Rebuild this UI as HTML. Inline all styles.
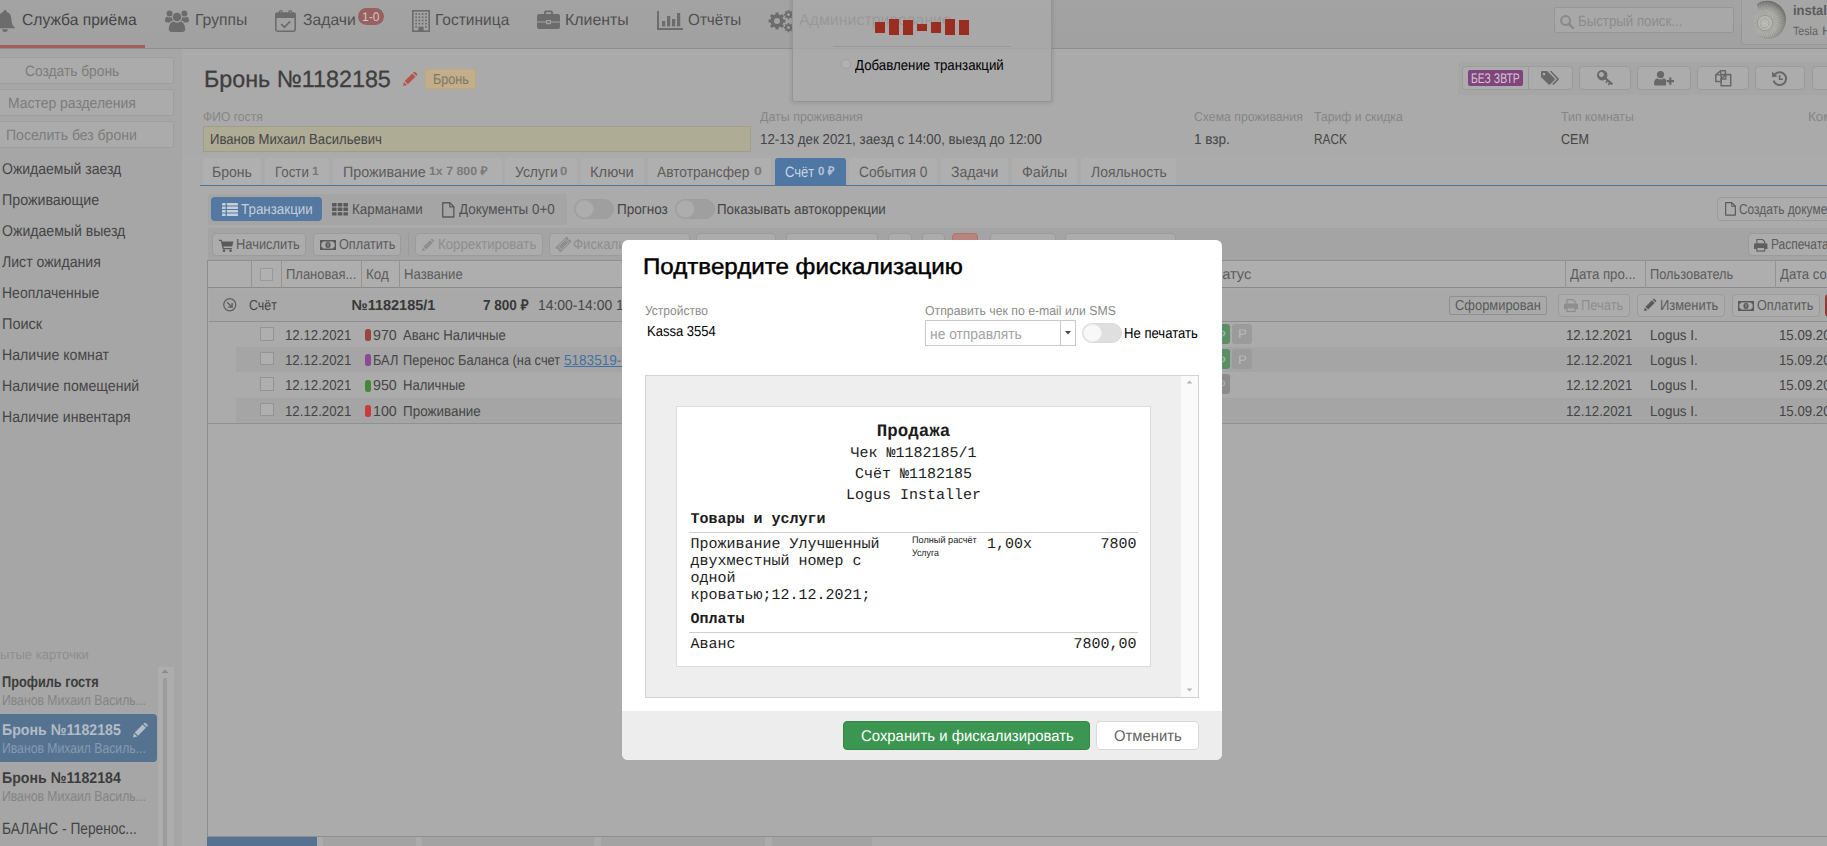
<!DOCTYPE html>
<html lang="ru"><head><meta charset="utf-8"><title>Бронь №1182185</title>
<style>
html,body{margin:0;padding:0}
body{width:1827px;height:846px;overflow:hidden;position:relative;background:#ababab;font-family:"Liberation Sans",sans-serif}
.b{position:absolute;box-sizing:border-box;display:block}
.t{position:absolute;white-space:nowrap;transform-origin:0 50%;display:block;font-family:"Liberation Sans",sans-serif;font-weight:normal;text-rendering:geometricPrecision}
.m{font-family:"Liberation Mono",monospace}
.bd{font-weight:bold}
</style></head><body>
<div class="b" style="left:0.00px;top:49.00px;width:182.00px;height:797.00px;background:#a6a6a6;"></div>
<div class="b" style="left:182.00px;top:49.00px;width:1645.00px;height:106.00px;background:#aaaaaa;"></div>
<div class="b" style="left:0.00px;top:0.00px;width:1827.00px;height:48.00px;background:linear-gradient(#a3a3a3,#a1a1a1);"></div>
<div class="b" style="left:0.00px;top:48.00px;width:1827.00px;height:1.00px;background:#8e8e8e;"></div>
<div class="b" style="left:0.00px;top:45.00px;width:145.00px;height:3.00px;background:#a55f5a;"></div>
<svg class="b" style="left:-6.00px;top:10.00px;overflow:visible;" width="22.00" height="22.00" viewBox="0 0 22 22"><circle cx="11" cy="1.6" r="1.6" fill="#6c6c6c"/><path d="M11 1.8C6.3 1.8 4.6 5.5 4.6 9.5C4.6 13.8 3 16 0.6 18.2H21.4C19 16 17.4 13.8 17.4 9.5C17.4 5.5 15.7 1.8 11 1.8Z" fill="#6c6c6c"/><path d="M8.2 19.2a2.8 2.8 0 0 0 5.6 0z" fill="#6c6c6c"/></svg>
<svg class="b" style="left:165.00px;top:10.00px;overflow:visible;" width="24.00" height="22.00" viewBox="0 0 24 22"><circle cx="12" cy="7" r="4.3" fill="#6c6c6c"/><path d="M3.8 19.2C3.8 14 6.8 11.6 8.8 11.6C9.8 12.4 10.9 12.8 12 12.8C13.1 12.8 14.2 12.4 15.2 11.6C17.2 11.6 20.2 14 20.2 19.2C20.2 21 19 22 17.4 22H6.6C5 22 3.8 21 3.8 19.2Z" fill="#6c6c6c"/><circle cx="4.6" cy="3.6" r="3" fill="#6c6c6c"/><circle cx="19.4" cy="3.6" r="3" fill="#6c6c6c"/><path d="M0 10.5C0 8 1.2 6.8 2.4 6.8C3.1 7.3 3.8 7.6 4.6 7.6C5.4 7.6 6.2 7.3 6.8 6.9C6.9 8.5 7.4 9.6 8.2 10.6C6.8 10.7 5.6 11.3 4.8 12.4H2C0.8 12.4 0 11.7 0 10.5Z" fill="#6c6c6c"/><path d="M24 10.5C24 8 22.8 6.8 21.6 6.8C20.9 7.3 20.2 7.6 19.4 7.6C18.6 7.6 17.8 7.3 17.2 6.9C17.1 8.5 16.6 9.6 15.8 10.6C17.2 10.7 18.4 11.3 19.2 12.4H22C23.2 12.4 24 11.7 24 10.5Z" fill="#6c6c6c"/></svg>
<svg class="b" style="left:275.00px;top:10.00px;overflow:visible;" width="21.00" height="22.00" viewBox="0 0 21 22"><path d="M0.8 4.6a1.6 1.6 0 0 1 1.6-1.6H18.6a1.6 1.6 0 0 1 1.6 1.6V19.6a1.6 1.6 0 0 1-1.6 1.6H2.4a1.6 1.6 0 0 1-1.6-1.6Z" fill="none" stroke="#6c6c6c" stroke-width="1.6"/><rect x="0.8" y="3" width="19.4" height="5" fill="#6c6c6c"/><rect x="4.4" y="0.6" width="2.8" height="5.2" rx="1.4" fill="none" stroke="#6c6c6c" stroke-width="1.1"/><rect x="13.8" y="0.6" width="2.8" height="5.2" rx="1.4" fill="none" stroke="#6c6c6c" stroke-width="1.1"/><path d="M6.2 14.2L9.4 17.2L15.2 11.4" fill="none" stroke="#6c6c6c" stroke-width="1.7"/></svg>
<svg class="b" style="left:412.00px;top:10.00px;overflow:visible;" width="18.00" height="22.00" viewBox="0 0 18 22"><rect x="0.8" y="0.8" width="16.4" height="20.4" fill="none" stroke="#6c6c6c" stroke-width="1.6"/><rect x="3.3" y="3.2" width="1.7" height="1.7" fill="#6c6c6c"/><rect x="6.5" y="3.2" width="1.7" height="1.7" fill="#6c6c6c"/><rect x="9.8" y="3.2" width="1.7" height="1.7" fill="#6c6c6c"/><rect x="13.1" y="3.2" width="1.7" height="1.7" fill="#6c6c6c"/><rect x="3.3" y="6.4" width="1.7" height="1.7" fill="#6c6c6c"/><rect x="6.5" y="6.4" width="1.7" height="1.7" fill="#6c6c6c"/><rect x="9.8" y="6.4" width="1.7" height="1.7" fill="#6c6c6c"/><rect x="13.1" y="6.4" width="1.7" height="1.7" fill="#6c6c6c"/><rect x="3.3" y="9.6" width="1.7" height="1.7" fill="#6c6c6c"/><rect x="6.5" y="9.6" width="1.7" height="1.7" fill="#6c6c6c"/><rect x="9.8" y="9.6" width="1.7" height="1.7" fill="#6c6c6c"/><rect x="13.1" y="9.6" width="1.7" height="1.7" fill="#6c6c6c"/><rect x="3.3" y="12.8" width="1.7" height="1.7" fill="#6c6c6c"/><rect x="6.5" y="12.8" width="1.7" height="1.7" fill="#6c6c6c"/><rect x="9.8" y="12.8" width="1.7" height="1.7" fill="#6c6c6c"/><rect x="13.1" y="12.8" width="1.7" height="1.7" fill="#6c6c6c"/><rect x="3.3" y="16.0" width="1.7" height="1.7" fill="#6c6c6c"/><rect x="13.1" y="16.0" width="1.7" height="1.7" fill="#6c6c6c"/><rect x="6.4" y="16.6" width="5.2" height="4.6" fill="#6c6c6c"/></svg>
<svg class="b" style="left:536.50px;top:10.00px;overflow:visible;" width="23.00" height="19.00" viewBox="0 0 23 19"><path d="M8 4.2V2.4a1 1 0 0 1 1-1h5a1 1 0 0 1 1 1V4.2" fill="none" stroke="#6c6c6c" stroke-width="1.9"/><path d="M0 6a2 2 0 0 1 2-2H21a2 2 0 0 1 2 2V11.4H14V10H9V11.4H0Z" fill="#6c6c6c"/><path d="M0 12.6H9V14.2H14V12.6H23V17a2 2 0 0 1-2 2H2a2 2 0 0 1-2-2Z" fill="#6c6c6c"/><rect x="10.2" y="11.2" width="2.6" height="1.8" fill="#6c6c6c"/></svg>
<svg class="b" style="left:656.50px;top:11.30px;overflow:visible;" width="26.00" height="19.00" viewBox="0 0 26 19"><path d="M1 0V18H26" fill="none" stroke="#6c6c6c" stroke-width="2"/><rect x="5" y="10" width="3.2" height="5.4" fill="#6c6c6c"/><rect x="10" y="5" width="3.2" height="10.4" fill="#6c6c6c"/><rect x="15" y="8" width="3.2" height="7.4" fill="#6c6c6c"/><rect x="20" y="2" width="3.2" height="13.4" fill="#6c6c6c"/></svg>
<svg class="b" style="left:768.00px;top:10.00px;overflow:visible;" width="26.00" height="22.50" viewBox="0 0 26 22.5"><path d="M17.47 9.52 L17.47 12.48 L15.42 12.54 L14.63 14.45 L16.04 15.95 L13.95 18.04 L12.45 16.63 L10.54 17.42 L10.48 19.47 L7.52 19.47 L7.46 17.42 L5.55 16.63 L4.05 18.04 L1.96 15.95 L3.37 14.45 L2.58 12.54 L0.53 12.48 L0.53 9.52 L2.58 9.46 L3.37 7.55 L1.96 6.05 L4.05 3.96 L5.55 5.37 L7.46 4.58 L7.52 2.53 L10.48 2.53 L10.54 4.58 L12.45 5.37 L13.95 3.96 L16.04 6.05 L14.63 7.55 L15.42 9.46Z M6.00 11.00 a3.00 3.00 0 1 0 6.00 0 a3.00 3.00 0 1 0 -6.00 0Z" fill="#6c6c6c" fill-rule="evenodd"/><path d="M25.03 3.81 L25.03 5.39 L23.81 5.39 L23.40 6.38 L24.26 7.25 L23.15 8.36 L22.28 7.50 L21.29 7.91 L21.29 9.13 L19.71 9.13 L19.71 7.91 L18.72 7.50 L17.85 8.36 L16.74 7.25 L17.60 6.38 L17.19 5.39 L15.97 5.39 L15.97 3.81 L17.19 3.81 L17.60 2.82 L16.74 1.95 L17.85 0.84 L18.72 1.70 L19.71 1.29 L19.71 0.07 L21.29 0.07 L21.29 1.29 L22.28 1.70 L23.15 0.84 L24.26 1.95 L23.40 2.82 L23.81 3.81Z M19.00 4.60 a1.50 1.50 0 1 0 3.00 0 a1.50 1.50 0 1 0 -3.00 0Z" fill="#6c6c6c" fill-rule="evenodd"/><path d="M25.03 16.81 L25.03 18.39 L23.81 18.39 L23.40 19.38 L24.26 20.25 L23.15 21.36 L22.28 20.50 L21.29 20.91 L21.29 22.13 L19.71 22.13 L19.71 20.91 L18.72 20.50 L17.85 21.36 L16.74 20.25 L17.60 19.38 L17.19 18.39 L15.97 18.39 L15.97 16.81 L17.19 16.81 L17.60 15.82 L16.74 14.95 L17.85 13.84 L18.72 14.70 L19.71 14.29 L19.71 13.07 L21.29 13.07 L21.29 14.29 L22.28 14.70 L23.15 13.84 L24.26 14.95 L23.40 15.82 L23.81 16.81Z M19.00 17.60 a1.50 1.50 0 1 0 3.00 0 a1.50 1.50 0 1 0 -3.00 0Z" fill="#6c6c6c" fill-rule="evenodd"/></svg>
<span class="t" style="left:21.50px;top:10.00px;font-size:16px;line-height:21px;color:#454545;transform:scaleX(0.9775);">Служба приёма</span>
<span class="t" style="left:194.50px;top:10.00px;font-size:16px;line-height:21px;color:#505050;transform:scaleX(0.9816);">Группы</span>
<span class="t" style="left:302.50px;top:10.00px;font-size:16px;line-height:21px;color:#505050;transform:scaleX(0.9821);">Задачи</span>
<div class="b" style="left:358.00px;top:8.00px;width:26.00px;height:17.00px;background:#986060;border-radius:9px;"></div>
<span class="t" style="left:362.20px;top:9.00px;font-size:12.5px;line-height:16px;color:#d6c6c2;transform:scaleX(0.9633);">1-0</span>
<span class="t" style="left:434.50px;top:10.00px;font-size:16px;line-height:21px;color:#505050;transform:scaleX(0.9695);">Гостиница</span>
<span class="t" style="left:564.50px;top:10.00px;font-size:16px;line-height:21px;color:#505050;transform:scaleX(0.9944);">Клиенты</span>
<span class="t" style="left:687.50px;top:10.00px;font-size:16px;line-height:21px;color:#505050;transform:scaleX(0.9545);">Отчёты</span>
<span class="t" style="left:798.50px;top:10.00px;font-size:16px;line-height:21px;color:#505050;transform:scaleX(0.9950);">Администрирование</span>
<div class="b" style="left:1554.00px;top:7.00px;width:180.00px;height:26.00px;background:#a8a8a8;border:1px solid #979797;border-radius:2px;"></div>
<svg class="b" style="left:1559.50px;top:14.50px;overflow:visible;" width="14.00" height="14.00" viewBox="0 0 14 14"><circle cx="5.6" cy="5.6" r="4.5" fill="none" stroke="#8a8a8a" stroke-width="2"/><path d="M8.8 8.8L13 13" stroke="#8a8a8a" stroke-width="2.4" stroke-linecap="round"/></svg>
<span class="t" style="left:1577.50px;top:12.00px;font-size:15px;line-height:20px;color:#8c8c8c;transform:scaleX(0.8835);">Быстрый поиск...</span>
<div class="b" style="left:1740.50px;top:-6.00px;width:99.50px;height:50.50px;background:#a6a6a6;border:1px solid #979797;border-radius:4px;"></div>
<svg class="b" style="left:1752.00px;top:0.00px;" width="35.00" height="40.00" viewBox="0 0 35 40"><defs><radialGradient id="shg" cx="13" cy="23" r="22" gradientUnits="userSpaceOnUse"><stop offset="0" stop-color="#c2c2be"/><stop offset="0.55" stop-color="#b4b4b0"/><stop offset="0.85" stop-color="#8e8e8a"/><stop offset="1" stop-color="#727270"/></radialGradient><clipPath id="shc"><path d="M5 4C8 1 14 0 19 1C27 3 34 10 34 19C34 30 26 39 16 39C7 39 1 32 1 24C1 18 4 13 9 12C7 10 5 7 5 4Z"/></clipPath></defs><path d="M5 4C8 1 14 0 19 1C27 3 34 10 34 19C34 30 26 39 16 39C7 39 1 32 1 24C1 18 4 13 9 12C7 10 5 7 5 4Z" fill="url(#shg)"/><g clip-path="url(#shc)" stroke="#666662" stroke-width="0.55" opacity="0.45"><path d="M20.50 23.00L42.07 30.42"/><path d="M20.42 24.07L40.72 34.48"/><path d="M20.20 25.11L38.80 38.31"/><path d="M19.82 26.12L36.36 41.83"/><path d="M19.31 27.05L33.44 44.96"/><path d="M18.67 27.91L30.11 47.64"/><path d="M17.91 28.67L26.43 49.83"/><path d="M17.05 29.31L22.47 51.47"/><path d="M16.12 29.82L18.32 52.52"/><path d="M15.11 30.20L14.07 52.98"/><path d="M14.07 30.42L9.79 52.83"/><path d="M13.00 30.50L5.58 52.07"/><path d="M11.93 30.42L1.52 50.72"/><path d="M10.89 30.20L-2.31 48.80"/><path d="M9.88 29.82L-5.83 46.36"/><path d="M8.95 29.31L-8.96 43.44"/><path d="M8.09 28.67L-11.64 40.11"/><path d="M7.33 27.91L-13.83 36.43"/><path d="M6.69 27.05L-15.47 32.47"/><path d="M6.18 26.12L-16.52 28.32"/><path d="M5.80 25.11L-16.98 24.07"/><path d="M5.58 24.07L-16.83 19.79"/><path d="M5.50 23.00L-16.07 15.58"/><path d="M5.58 21.93L-14.72 11.52"/><path d="M5.80 20.89L-12.80 7.69"/><path d="M6.18 19.88L-10.36 4.17"/><path d="M6.69 18.95L-7.44 1.04"/><path d="M7.33 18.09L-4.11 -1.64"/><path d="M8.09 17.33L-0.43 -3.83"/><path d="M8.95 16.69L3.53 -5.47"/><path d="M9.88 16.18L7.68 -6.52"/><path d="M10.89 15.80L11.93 -6.98"/><path d="M11.93 15.58L16.21 -6.83"/><path d="M13.00 15.50L20.42 -6.07"/><path d="M14.07 15.58L24.48 -4.72"/><path d="M15.11 15.80L28.31 -2.80"/><path d="M16.12 16.18L31.83 -0.36"/><path d="M17.05 16.69L34.96 2.56"/><path d="M17.91 17.33L37.64 5.89"/><path d="M18.67 18.09L39.83 9.57"/><path d="M19.31 18.95L41.47 13.53"/><path d="M19.82 19.88L42.52 17.68"/><path d="M20.20 20.89L42.98 21.93"/><path d="M20.42 21.93L42.83 26.21"/></g><circle cx="13" cy="23" r="7.6" fill="#b6b6b2" stroke="#8c8c88" stroke-width="0.7"/><circle cx="12.6" cy="23.3" r="4.4" fill="#bcbcb8" stroke="#94948f" stroke-width="0.6"/><circle cx="12.4" cy="23.4" r="2" fill="#c2c2be" stroke="#9a9a96" stroke-width="0.5"/></svg>
<span class="t bd" style="left:1792.90px;top:2.00px;font-size:13.8px;line-height:18px;color:#5c5c5c;transform:scaleX(0.9412);">instal</span>
<span class="t" style="left:1792.90px;top:23.00px;font-size:12px;line-height:16px;color:#626262;transform:scaleX(0.8868);">Tesla</span>
<span class="t" style="left:1821.50px;top:23.00px;font-size:12px;line-height:16px;color:#626262;transform:scaleX(1.1343);">H</span>
<div class="b" style="left:-4.00px;top:57.00px;width:177.50px;height:26.50px;background:#ababab;border:1px solid #9e9e9e;border-radius:3px;"></div>
<span class="t" style="left:24.90px;top:62.00px;font-size:15px;line-height:20px;color:#7c7c7c;transform:scaleX(0.9188);">Создать бронь</span>
<div class="b" style="left:-4.00px;top:89.00px;width:177.50px;height:26.50px;background:#ababab;border:1px solid #9e9e9e;border-radius:3px;"></div>
<span class="t" style="left:7.50px;top:94.00px;font-size:15px;line-height:20px;color:#7c7c7c;transform:scaleX(0.9286);">Мастер разделения</span>
<div class="b" style="left:-4.00px;top:121.00px;width:177.50px;height:26.50px;background:#ababab;border:1px solid #9e9e9e;border-radius:3px;"></div>
<span class="t" style="left:5.50px;top:126.00px;font-size:15px;line-height:20px;color:#7c7c7c;transform:scaleX(0.9351);">Поселить без брони</span>
<span class="t" style="left:2.00px;top:160.00px;font-size:15.5px;line-height:20px;color:#454545;transform:scaleX(0.9039);">Ожидаемый заезд</span>
<span class="t" style="left:2.00px;top:191.00px;font-size:15.5px;line-height:20px;color:#454545;transform:scaleX(0.9199);">Проживающие</span>
<span class="t" style="left:2.00px;top:222.00px;font-size:15.5px;line-height:20px;color:#454545;transform:scaleX(0.9091);">Ожидаемый выезд</span>
<span class="t" style="left:2.00px;top:253.00px;font-size:15.5px;line-height:20px;color:#454545;transform:scaleX(0.9087);">Лист ожидания</span>
<span class="t" style="left:2.00px;top:284.00px;font-size:15.5px;line-height:20px;color:#454545;transform:scaleX(0.9032);">Неоплаченные</span>
<span class="t" style="left:2.00px;top:315.00px;font-size:15.5px;line-height:20px;color:#454545;transform:scaleX(0.9353);">Поиск</span>
<span class="t" style="left:2.00px;top:346.00px;font-size:15.5px;line-height:20px;color:#454545;transform:scaleX(0.9111);">Наличие комнат</span>
<span class="t" style="left:2.00px;top:377.00px;font-size:15.5px;line-height:20px;color:#454545;transform:scaleX(0.9118);">Наличие помещений</span>
<span class="t" style="left:2.00px;top:408.00px;font-size:15.5px;line-height:20px;color:#454545;transform:scaleX(0.9053);">Наличие инвентаря</span>
<span class="t" style="left:-0.50px;top:646.00px;font-size:13.5px;line-height:18px;color:#8f8f8f;transform:scaleX(0.9702);">ытые карточки</span>
<div class="b" style="left:157.50px;top:666.50px;width:16.50px;height:179.50px;background:#adadad;"></div>
<div class="b" style="left:163.00px;top:678.00px;width:4.00px;height:168.00px;background:#9c9c9c;"></div>
<svg class="b" style="left:160.00px;top:668.00px;" width="10.00" height="6.00" viewBox="0 0 10 6"><path d="M1.5 5L5 1.5L8.5 5z" fill="#8a8a8a"/></svg>
<span class="t bd" style="left:1.50px;top:673.00px;font-size:15.5px;line-height:20px;color:#3c3c3c;transform:scaleX(0.8228);">Профиль гостя</span>
<span class="t" style="left:1.50px;top:692.00px;font-size:14.5px;line-height:19px;color:#848484;transform:scaleX(0.8412);">Иванов Михаил Василь...</span>
<div class="b" style="left:-4.00px;top:714.00px;width:161.00px;height:48.00px;background:#557391;border-radius:4px;"></div>
<span class="t bd" style="left:1.50px;top:721.00px;font-size:15.5px;line-height:20px;color:#b4bcc6;transform:scaleX(0.9135);">Бронь №1182185</span>
<svg class="b" style="left:133.00px;top:723.00px;overflow:visible;" width="14.50" height="14.50" viewBox="0 0 14 14"><path d="M0 14L0.9 9.9L4.1 13.1Z" fill="#b4bcc6"/><path d="M1.7 9.1L9.3 1.5L12.5 4.7L4.9 12.3Z" fill="#b4bcc6"/><path d="M10.1 0.7L10.8 0A1 1 0 0 1 12.2 0L14 1.8A1 1 0 0 1 14 3.2L13.3 3.9Z" fill="#b4bcc6"/></svg>
<span class="t" style="left:1.50px;top:740.00px;font-size:14.5px;line-height:19px;color:#8599b1;transform:scaleX(0.8412);">Иванов Михаил Василь...</span>
<span class="t bd" style="left:1.50px;top:769.00px;font-size:15.5px;line-height:20px;color:#3c3c3c;transform:scaleX(0.9135);">Бронь №1182184</span>
<span class="t" style="left:1.50px;top:788.00px;font-size:14.5px;line-height:19px;color:#848484;transform:scaleX(0.8412);">Иванов Михаил Василь...</span>
<span class="t" style="left:1.50px;top:819.00px;font-size:16.5px;line-height:21px;color:#444;transform:scaleX(0.8328);">БАЛАНС - Перенос...</span>
<span class="t" style="left:203.50px;top:64.00px;font-size:23.5px;line-height:31px;color:#3e3e3e;transform:scaleX(0.9924);-webkit-text-stroke:0.3px #3e3e3e;">Бронь №1182185</span>
<svg class="b" style="left:403.00px;top:72.00px;overflow:visible;" width="14.00" height="14.00" viewBox="0 0 14 14"><path d="M0 14L0.9 9.9L4.1 13.1Z" fill="#b9544c"/><path d="M1.7 9.1L9.3 1.5L12.5 4.7L4.9 12.3Z" fill="#b9544c"/><path d="M10.1 0.7L10.8 0A1 1 0 0 1 12.2 0L14 1.8A1 1 0 0 1 14 3.2L13.3 3.9Z" fill="#b9544c"/></svg>
<div class="b" style="left:425.00px;top:69.00px;width:51.00px;height:20.00px;background:#c2ae8a;border:1px solid #c0a777;border-radius:3px;"></div>
<span class="t" style="left:432.50px;top:71.00px;font-size:14.5px;line-height:19px;color:#7d7666;transform:scaleX(0.8694);">Бронь</span>
<div class="b" style="left:1458.00px;top:61.50px;width:382.00px;height:33.00px;background:#a6a6a6;border-radius:3px;"></div>
<div class="b" style="left:1462.00px;top:66.00px;width:110.50px;height:23.50px;background:#acacac;border:1px solid #9b9b9b;border-radius:4px;"></div>
<div class="b" style="left:1468.00px;top:70.00px;width:55.00px;height:16.00px;background:#7f457c;border-radius:2px;"></div>
<span class="t" style="left:1471.00px;top:69.00px;font-size:14px;line-height:18px;color:#d6c6d5;transform:scaleX(0.7472);">БЕЗ ЗВТР</span>
<div class="b" style="left:1528.00px;top:67.00px;width:1.00px;height:22.00px;background:#9b9b9b;"></div>
<div class="b" style="left:1579.00px;top:66.00px;width:51.50px;height:23.50px;background:#acacac;border:1px solid #9b9b9b;border-radius:4px;"></div>
<div class="b" style="left:1637.00px;top:66.00px;width:53.50px;height:23.50px;background:#acacac;border:1px solid #9b9b9b;border-radius:4px;"></div>
<div class="b" style="left:1697.00px;top:66.00px;width:51.50px;height:23.50px;background:#acacac;border:1px solid #9b9b9b;border-radius:4px;"></div>
<div class="b" style="left:1755.00px;top:66.00px;width:49.50px;height:23.50px;background:#acacac;border:1px solid #9b9b9b;border-radius:4px;"></div>
<div class="b" style="left:1811.50px;top:66.00px;width:38.50px;height:23.50px;background:#acacac;border:1px solid #9b9b9b;border-radius:4px;"></div>
<svg class="b" style="left:1541.00px;top:71.00px;overflow:visible;" width="18.00" height="14.00" viewBox="0 0 18 14"><path d="M0 1.2A1.2 1.2 0 0 1 1.2 0H6.2L13.6 7.4a1 1 0 0 1 0 1.4L9 13.4a1 1 0 0 1-1.4 0L0 6Z M3 1.8a1.3 1.3 0 1 0 0.01 0Z" fill="#686868" fill-rule="evenodd"/><path d="M8.6 0H10.4L17.6 7.4a1 1 0 0 1 0 1.4L13 13.4a1 1 0 0 1-1.4 0L11.2 13L15.4 8.8a1 1 0 0 0 0-1.4Z" fill="#686868"/></svg>
<svg class="b" style="left:1596.50px;top:70.00px;overflow:visible;" width="16.00" height="15.40" viewBox="0 0 16 15.4"><path d="M5.2 0a5.2 5.2 0 1 0 0.01 0Z M4.4 2a2.5 2.5 0 1 1-0.01 0Z" fill="#686868" fill-rule="evenodd"/><path d="M8 6.4L16 13.6L14.6 15.2L13.2 14L11.8 15.4L10.6 14.3L12 12.9L10.8 11.8L9.4 13.2L8.2 12.1L9.6 10.7L6.4 7.9Z" fill="#686868"/></svg>
<svg class="b" style="left:1654.00px;top:70.50px;overflow:visible;" width="20.50" height="14.50" viewBox="0 0 20.5 14.5"><circle cx="6.5" cy="3.6" r="3.6" fill="#686868"/><path d="M0 12.4C0 9 1.8 7.4 3.6 7.4C4.4 8 5.4 8.4 6.5 8.4C7.6 8.4 8.6 8 9.4 7.4C10.4 7.4 11.3 7.9 12 8.8V14.4H2C0.8 14.4 0 13.8 0 12.4Z" fill="#686868"/><path d="M12.6 9H15.2V6.4H17.4V9H20V11.2H17.4V13.8H15.2V11.2H12.6Z" fill="#686868"/></svg>
<svg class="b" style="left:1715.00px;top:70.00px;overflow:visible;" width="16.50" height="16.50" viewBox="0 0 15 15"><path d="M5.2 0.7H9.4V4.2H5.6V10.4H0.7V4.4Z" fill="none" stroke="#686868" stroke-width="1.4" stroke-linejoin="round"/><path d="M5.2 0.7V4.4H0.7" fill="none" stroke="#686868" stroke-width="1.2"/><path d="M9.8 4.2H14.3V14.3H5.6V8.2Z" fill="none" stroke="#686868" stroke-width="1.4" stroke-linejoin="round"/><path d="M9.8 4.2V8.2H5.6" fill="none" stroke="#686868" stroke-width="1.2"/></svg>
<svg class="b" style="left:1772.00px;top:70.50px;overflow:visible;" width="15.00" height="15.00" viewBox="0 0 15 15"><path d="M2.3 4.2A6.4 6.4 0 1 1 1.6 9.6" fill="none" stroke="#686868" stroke-width="2"/><path d="M0 0.6L0.2 6.2L5.6 5.6Z" fill="#686868"/><path d="M7.6 4V8.2H11" fill="none" stroke="#686868" stroke-width="1.6"/></svg>
<span class="t" style="left:202.50px;top:108.00px;font-size:13px;line-height:17px;color:#868686;transform:scaleX(0.9321);">ФИО гостя</span>
<div class="b" style="left:203.00px;top:126.00px;width:547.50px;height:25.50px;background:#aeac95;border:1px solid #a09e86;"></div>
<span class="t" style="left:209.50px;top:131.00px;font-size:14.5px;line-height:19px;color:#454545;transform:scaleX(0.9031);">Иванов Михаил Васильевич</span>
<span class="t" style="left:759.50px;top:108.00px;font-size:13px;line-height:17px;color:#868686;transform:scaleX(0.9568);">Даты проживания</span>
<span class="t" style="left:759.50px;top:131.00px;font-size:14.5px;line-height:19px;color:#454545;transform:scaleX(0.9187);">12-13 дек 2021, заезд с 14:00, выезд до 12:00</span>
<span class="t" style="left:1193.50px;top:108.00px;font-size:13px;line-height:17px;color:#868686;transform:scaleX(0.9420);">Схема проживания</span>
<span class="t" style="left:1193.50px;top:131.00px;font-size:14.5px;line-height:19px;color:#454545;transform:scaleX(0.9334);">1 взр.</span>
<span class="t" style="left:1313.50px;top:108.00px;font-size:13px;line-height:17px;color:#868686;transform:scaleX(0.9389);">Тариф и скидка</span>
<span class="t" style="left:1313.50px;top:131.00px;font-size:14.5px;line-height:19px;color:#454545;transform:scaleX(0.8137);">RACK</span>
<span class="t" style="left:1560.50px;top:108.00px;font-size:13px;line-height:17px;color:#868686;transform:scaleX(0.9492);">Тип комнаты</span>
<span class="t" style="left:1560.50px;top:131.00px;font-size:14.5px;line-height:19px;color:#454545;transform:scaleX(0.8636);">СЕМ</span>
<span class="t" style="left:1807.50px;top:108.00px;font-size:13px;line-height:17px;color:#868686;transform:scaleX(1.0361);">Комната</span>
<div class="b" style="left:203.00px;top:158.00px;width:58.00px;height:27.50px;background:#afafaf;border-radius:3px 3px 0 0;"></div>
<span class="t" style="left:211.50px;top:163.00px;font-size:15px;line-height:20px;color:#5c5c5c;transform:scaleX(0.9343);">Бронь</span>
<div class="b" style="left:265.00px;top:158.00px;width:64.00px;height:27.50px;background:#afafaf;border-radius:3px 3px 0 0;"></div>
<span class="t" style="left:274.50px;top:163.00px;font-size:15px;line-height:20px;color:#5c5c5c;transform:scaleX(0.8854);">Гости</span>
<span class="t bd" style="left:311.50px;top:163.00px;font-size:12px;line-height:16px;color:#7a7a7a;transform:scaleX(1.0210);">1</span>
<div class="b" style="left:333.00px;top:158.00px;width:168.50px;height:27.50px;background:#afafaf;border-radius:3px 3px 0 0;"></div>
<span class="t" style="left:342.50px;top:163.00px;font-size:15px;line-height:20px;color:#5c5c5c;transform:scaleX(0.9534);">Проживание</span>
<span class="t bd" style="left:428.50px;top:163.00px;font-size:12px;line-height:16px;color:#7a7a7a;transform:scaleX(1.0298);">1x 7 800 ₽</span>
<div class="b" style="left:505.00px;top:158.00px;width:72.00px;height:27.50px;background:#afafaf;border-radius:3px 3px 0 0;"></div>
<span class="t" style="left:514.50px;top:163.00px;font-size:15px;line-height:20px;color:#5c5c5c;transform:scaleX(0.9279);">Услуги</span>
<span class="t bd" style="left:560.00px;top:163.00px;font-size:12px;line-height:16px;color:#7a7a7a;transform:scaleX(1.0961);">0</span>
<div class="b" style="left:581.00px;top:158.00px;width:63.00px;height:27.50px;background:#afafaf;border-radius:3px 3px 0 0;"></div>
<span class="t" style="left:590.00px;top:163.00px;font-size:15px;line-height:20px;color:#5c5c5c;transform:scaleX(0.9815);">Ключи</span>
<div class="b" style="left:648.00px;top:158.00px;width:123.00px;height:27.50px;background:#afafaf;border-radius:3px 3px 0 0;"></div>
<span class="t" style="left:657.00px;top:163.00px;font-size:15px;line-height:20px;color:#5c5c5c;transform:scaleX(0.9164);">Автотрансфер</span>
<span class="t bd" style="left:753.50px;top:163.00px;font-size:12px;line-height:16px;color:#7a7a7a;transform:scaleX(1.1712);">0</span>
<div class="b" style="left:775.00px;top:158.00px;width:70.50px;height:27.50px;background:#4f77a3;border-radius:3px 3px 0 0;"></div>
<span class="t" style="left:784.50px;top:163.00px;font-size:15px;line-height:20px;color:#c9d4e0;transform:scaleX(0.8701);">Счёт</span>
<span class="t bd" style="left:817.50px;top:163.00px;font-size:12px;line-height:16px;color:#b3c4d6;transform:scaleX(0.9621);">0 ₽</span>
<div class="b" style="left:849.00px;top:158.00px;width:88.00px;height:27.50px;background:#afafaf;border-radius:3px 3px 0 0;"></div>
<span class="t" style="left:859.00px;top:163.00px;font-size:15px;line-height:20px;color:#5c5c5c;transform:scaleX(0.9180);">События 0</span>
<div class="b" style="left:941.00px;top:158.00px;width:67.00px;height:27.50px;background:#afafaf;border-radius:3px 3px 0 0;"></div>
<span class="t" style="left:950.50px;top:163.00px;font-size:15px;line-height:20px;color:#5c5c5c;transform:scaleX(0.9385);">Задачи</span>
<div class="b" style="left:1012.00px;top:158.00px;width:64.50px;height:27.50px;background:#afafaf;border-radius:3px 3px 0 0;"></div>
<span class="t" style="left:1021.50px;top:163.00px;font-size:15px;line-height:20px;color:#5c5c5c;transform:scaleX(0.9512);">Файлы</span>
<div class="b" style="left:1081.00px;top:158.00px;width:95.00px;height:27.50px;background:#afafaf;border-radius:3px 3px 0 0;"></div>
<span class="t" style="left:1090.50px;top:163.00px;font-size:15px;line-height:20px;color:#5c5c5c;transform:scaleX(0.9281);">Лояльность</span>
<div class="b" style="left:200.00px;top:185.00px;width:1627.00px;height:1.00px;background:#557396;"></div>
<div class="b" style="left:208.00px;top:193.50px;width:359.00px;height:31.50px;background:#a5a5a5;border-radius:3px;"></div>
<div class="b" style="left:211.00px;top:197.00px;width:110.50px;height:24.00px;background:#54789f;border-radius:4px;"></div>
<svg class="b" style="left:222.00px;top:203.00px;overflow:visible;" width="16.00" height="13.20" viewBox="0 0 16 13.2"><rect x="0" y="0.0" width="3.6" height="2.6" rx="0.5" fill="#c3cfdc"/><rect x="4.8" y="0.0" width="11.2" height="2.6" rx="0.5" fill="#c3cfdc"/><rect x="0" y="3.5" width="3.6" height="2.6" rx="0.5" fill="#c3cfdc"/><rect x="4.8" y="3.5" width="11.2" height="2.6" rx="0.5" fill="#c3cfdc"/><rect x="0" y="7.0" width="3.6" height="2.6" rx="0.5" fill="#c3cfdc"/><rect x="4.8" y="7.0" width="11.2" height="2.6" rx="0.5" fill="#c3cfdc"/><rect x="0" y="10.5" width="3.6" height="2.6" rx="0.5" fill="#c3cfdc"/><rect x="4.8" y="10.5" width="11.2" height="2.6" rx="0.5" fill="#c3cfdc"/></svg>
<svg class="b" style="left:332.00px;top:203.00px;overflow:visible;" width="16.00" height="12.60" viewBox="0 0 16 12.6"><rect x="0.0" y="0.0" width="4.6" height="3.4" rx="0.6" fill="#5a5a5a"/><rect x="5.7" y="0.0" width="4.6" height="3.4" rx="0.6" fill="#5a5a5a"/><rect x="11.4" y="0.0" width="4.6" height="3.4" rx="0.6" fill="#5a5a5a"/><rect x="0.0" y="4.6" width="4.6" height="3.4" rx="0.6" fill="#5a5a5a"/><rect x="5.7" y="4.6" width="4.6" height="3.4" rx="0.6" fill="#5a5a5a"/><rect x="11.4" y="4.6" width="4.6" height="3.4" rx="0.6" fill="#5a5a5a"/><rect x="0.0" y="9.2" width="4.6" height="3.4" rx="0.6" fill="#5a5a5a"/><rect x="5.7" y="9.2" width="4.6" height="3.4" rx="0.6" fill="#5a5a5a"/><rect x="11.4" y="9.2" width="4.6" height="3.4" rx="0.6" fill="#5a5a5a"/></svg>
<svg class="b" style="left:441.50px;top:201.50px;overflow:visible;" width="12.60" height="15.75" viewBox="0 0 12 15"><path d="M0.7 0.7H7.4L11.3 4.6V14.3H0.7Z" fill="none" stroke="#5a5a5a" stroke-width="1.3" stroke-linejoin="round"/><path d="M7.4 0.7V4.6H11.3" fill="none" stroke="#5a5a5a" stroke-width="1.1"/></svg>
<span class="t" style="left:240.50px;top:201.00px;font-size:14.5px;line-height:19px;color:#c3cfdc;transform:scaleX(0.9238);">Транзакции</span>
<span class="t" style="left:351.50px;top:201.00px;font-size:14.5px;line-height:19px;color:#505050;transform:scaleX(0.9221);">Карманами</span>
<span class="t" style="left:458.50px;top:201.00px;font-size:14.5px;line-height:19px;color:#505050;transform:scaleX(0.9266);">Документы 0+0</span>
<div class="b" style="left:574.00px;top:199.00px;width:39.50px;height:20.00px;background:#9f9f9f;border:1px solid #9d9d9d;border-radius:11px;"></div>
<div class="b" style="left:575.00px;top:200.00px;width:18.50px;height:18.00px;background:#adadad;border:1px solid #a6a6a6;border-radius:10px;"></div>
<div class="b" style="left:675.00px;top:199.00px;width:39.50px;height:20.00px;background:#9f9f9f;border:1px solid #9d9d9d;border-radius:11px;"></div>
<div class="b" style="left:676.00px;top:200.00px;width:18.50px;height:18.00px;background:#adadad;border:1px solid #a6a6a6;border-radius:10px;"></div>
<span class="t" style="left:616.50px;top:201.00px;font-size:14.5px;line-height:19px;color:#454545;transform:scaleX(0.9343);">Прогноз</span>
<span class="t" style="left:716.50px;top:201.00px;font-size:14.5px;line-height:19px;color:#454545;transform:scaleX(0.9214);">Показывать автокоррекции</span>
<div class="b" style="left:1717.00px;top:197.00px;width:133.00px;height:23.50px;background:#acacac;border:1px solid #9b9b9b;border-radius:4px;"></div>
<svg class="b" style="left:1725.00px;top:201.50px;overflow:visible;" width="11.00" height="13.75" viewBox="0 0 12 15"><path d="M0.7 0.7H7.4L11.3 4.6V14.3H0.7Z" fill="none" stroke="#5a5a5a" stroke-width="1.3" stroke-linejoin="round"/><path d="M7.4 0.7V4.6H11.3" fill="none" stroke="#5a5a5a" stroke-width="1.1"/></svg>
<span class="t" style="left:1738.50px;top:201.00px;font-size:14.5px;line-height:19px;color:#5a5a5a;transform:scaleX(0.8229);">Создать докуме</span>
<div class="b" style="left:208.00px;top:227.50px;width:1619.00px;height:33.00px;background:#a4a4a4;"></div>
<div class="b" style="left:212.00px;top:233.00px;width:94.00px;height:23.00px;background:#acacac;border:1px solid #9b9b9b;border-radius:4px;"></div>
<svg class="b" style="left:219.00px;top:238.50px;overflow:visible;" width="15.00" height="13.20" viewBox="0 0 15 13.2"><path d="M0 0.8H2.6L3.2 2.4H14.4L13.2 7.6H4.4L4.8 9H12.8V10.2H3.8L1.8 2H0Z" fill="#5a5a5a"/><circle cx="5" cy="11.8" r="1.3" fill="#5a5a5a"/><circle cx="11.6" cy="11.8" r="1.3" fill="#5a5a5a"/></svg>
<span class="t" style="left:236.00px;top:236.00px;font-size:14.5px;line-height:19px;color:#5a5a5a;transform:scaleX(0.8880);">Начислить</span>
<div class="b" style="left:313.00px;top:233.00px;width:88.00px;height:23.00px;background:#acacac;border:1px solid #9b9b9b;border-radius:4px;"></div>
<svg class="b" style="left:320.00px;top:240.00px;overflow:visible;" width="16.00" height="10.00" viewBox="0 0 16 10"><path d="M0 0H16V10H0Z M1.4 3A1.8 1.8 0 0 0 3 1.4H13A1.8 1.8 0 0 0 14.6 3V7A1.8 1.8 0 0 0 13 8.6H3A1.8 1.8 0 0 0 1.4 7Z" fill="#5a5a5a" fill-rule="evenodd"/><ellipse cx="8" cy="5" rx="2.6" ry="3" fill="#5a5a5a"/><path d="M7.4 3.4L8.4 3V6.4H7.6V4Z" fill="#b0b0b0"/></svg>
<span class="t" style="left:338.50px;top:236.00px;font-size:14.5px;line-height:19px;color:#5a5a5a;transform:scaleX(0.8755);">Оплатить</span>
<div class="b" style="left:408.00px;top:233.00px;width:1.00px;height:23.00px;background:#9a9a9a;"></div>
<div class="b" style="left:415.00px;top:233.00px;width:127.50px;height:23.00px;background:#acacac;border:1px solid #9b9b9b;border-radius:4px;"></div>
<svg class="b" style="left:421.50px;top:238.50px;overflow:visible;" width="12.00" height="12.00" viewBox="0 0 14 14"><path d="M0 14L0.9 9.9L4.1 13.1Z" fill="#8e8e8e"/><path d="M1.7 9.1L9.3 1.5L12.5 4.7L4.9 12.3Z" fill="#8e8e8e"/><path d="M10.1 0.7L10.8 0A1 1 0 0 1 12.2 0L14 1.8A1 1 0 0 1 14 3.2L13.3 3.9Z" fill="#8e8e8e"/></svg>
<span class="t" style="left:437.50px;top:236.00px;font-size:14.5px;line-height:19px;color:#8e8e8e;transform:scaleX(0.9137);">Корректировать</span>
<div class="b" style="left:549.00px;top:233.00px;width:141.00px;height:23.00px;background:#acacac;border:1px solid #9b9b9b;border-radius:4px;"></div>
<svg class="b" style="left:556.50px;top:238.00px;overflow:visible;" width="13.00" height="13.00" viewBox="0 0 14 14"><g transform="rotate(-45 7 7)"><path d="M-1.5 3.2H15.5V5.6A1.5 1.5 0 0 0 15.5 8.4V10.8H-1.5V8.4A1.5 1.5 0 0 0 -1.5 5.6Z" fill="#8e8e8e"/><rect x="1.4" y="4.6" width="11.2" height="4.8" fill="none" stroke="#b0b0b0" stroke-width="0.8"/></g></svg>
<span class="t" style="left:572.50px;top:236.00px;font-size:14.5px;line-height:19px;color:#8e8e8e;transform:scaleX(0.9133);">Фискализировать</span>
<div class="b" style="left:696.00px;top:233.00px;width:80.00px;height:23.00px;background:#acacac;border:1px solid #9b9b9b;border-radius:4px;"></div>
<div class="b" style="left:786.00px;top:233.00px;width:92.00px;height:23.00px;background:#acacac;border:1px solid #9b9b9b;border-radius:4px;"></div>
<div class="b" style="left:888.00px;top:233.00px;width:24.00px;height:23.00px;background:#acacac;border:1px solid #9b9b9b;border-radius:4px;"></div>
<div class="b" style="left:922.00px;top:233.00px;width:23.00px;height:23.00px;background:#acacac;border:1px solid #9b9b9b;border-radius:4px;"></div>
<div class="b" style="left:990.00px;top:233.00px;width:66.00px;height:23.00px;background:#acacac;border:1px solid #9b9b9b;border-radius:4px;"></div>
<div class="b" style="left:1065.00px;top:233.00px;width:111.00px;height:23.00px;background:#acacac;border:1px solid #9b9b9b;border-radius:4px;"></div>
<div class="b" style="left:952.00px;top:233.00px;width:26.00px;height:23.00px;background:#b9837e;border:1px solid #b0746f;border-radius:4px;"></div>
<div class="b" style="left:1747.50px;top:233.00px;width:102.50px;height:23.00px;background:#acacac;border:1px solid #9b9b9b;border-radius:4px;"></div>
<svg class="b" style="left:1754.00px;top:238.50px;overflow:visible;" width="13.50" height="12.60" viewBox="0 0 15 14"><path d="M3.2 5V0.6H9.6L11.8 2.8V5" fill="none" stroke="#5f5f5f" stroke-width="1.3"/><path d="M0 6.4A1.6 1.6 0 0 1 1.6 4.8H13.4A1.6 1.6 0 0 1 15 6.4V11H12V9H3V11H0Z" fill="#5f5f5f"/><rect x="3.2" y="9.4" width="8.6" height="4" fill="none" stroke="#5f5f5f" stroke-width="1.3"/></svg>
<span class="t" style="left:1770.50px;top:236.00px;font-size:14.5px;line-height:19px;color:#5a5a5a;transform:scaleX(0.8279);">Распечата</span>
<div class="b" style="left:208.00px;top:260.00px;width:1619.00px;height:28.00px;background:#aeaeae;border-top:1px solid #909090;border-bottom:1px solid #8a8a8a;"></div>
<div class="b" style="left:207.00px;top:260.00px;width:1.00px;height:577.00px;background:#8d8d8d;"></div>
<div class="b" style="left:251.00px;top:261.00px;width:1.00px;height:26.50px;background:#939393;"></div>
<div class="b" style="left:281.00px;top:261.00px;width:1.00px;height:26.50px;background:#939393;"></div>
<div class="b" style="left:361.00px;top:261.00px;width:1.00px;height:26.50px;background:#939393;"></div>
<div class="b" style="left:399.00px;top:261.00px;width:1.00px;height:26.50px;background:#939393;"></div>
<div class="b" style="left:1565.00px;top:261.00px;width:1.00px;height:26.50px;background:#939393;"></div>
<div class="b" style="left:1645.00px;top:261.00px;width:1.00px;height:26.50px;background:#939393;"></div>
<div class="b" style="left:1775.00px;top:261.00px;width:1.00px;height:26.50px;background:#939393;"></div>
<div class="b" style="left:259.50px;top:267.50px;width:13.00px;height:13.00px;background:#b1b1b1;border:1px solid #9a9a9a;"></div>
<span class="t" style="left:285.50px;top:266.00px;font-size:14.5px;line-height:19px;color:#5c5c5c;transform:scaleX(0.8945);">Плановая...</span>
<span class="t" style="left:365.50px;top:266.00px;font-size:14.5px;line-height:19px;color:#5c5c5c;transform:scaleX(0.9249);">Код</span>
<span class="t" style="left:403.50px;top:266.00px;font-size:14.5px;line-height:19px;color:#5c5c5c;transform:scaleX(0.9072);">Название</span>
<span class="t" style="left:1204.50px;top:266.00px;font-size:14.5px;line-height:19px;color:#5c5c5c;transform:scaleX(1.0105);">Статус</span>
<span class="t" style="left:1570.00px;top:266.00px;font-size:14.5px;line-height:19px;color:#5c5c5c;transform:scaleX(0.9112);">Дата про...</span>
<span class="t" style="left:1650.00px;top:266.00px;font-size:14.5px;line-height:19px;color:#5c5c5c;transform:scaleX(0.8852);">Пользователь</span>
<span class="t" style="left:1779.50px;top:266.00px;font-size:14.5px;line-height:19px;color:#5c5c5c;transform:scaleX(0.9066);">Дата со</span>
<div class="b" style="left:208.50px;top:288.50px;width:1618.50px;height:33.50px;background:#a9a9a9;border-bottom:1px solid #8f8f8f;"></div>
<svg class="b" style="left:222.50px;top:298.00px;overflow:visible;" width="13.50" height="13.50" viewBox="0 0 13 13"><circle cx="6.5" cy="6.5" r="5.8" fill="none" stroke="#5f5f5f" stroke-width="1.2"/><path d="M4 4L8.6 8.6M8.8 4.8V8.8H4.8" fill="none" stroke="#5f5f5f" stroke-width="1.3"/></svg>
<span class="t" style="left:248.50px;top:297.00px;font-size:14.5px;line-height:19px;color:#454545;transform:scaleX(0.8540);">Счёт</span>
<span class="t bd" style="left:351.50px;top:297.00px;font-size:14.5px;line-height:19px;color:#383838;">№1182185/1</span>
<span class="t bd" style="left:482.50px;top:297.00px;font-size:14.5px;line-height:19px;color:#383838;transform:scaleX(0.9339);">7 800 ₽</span>
<span class="t" style="left:537.50px;top:297.00px;font-size:14.5px;line-height:19px;color:#454545;transform:scaleX(0.9580);">14:00-14:00 12.12</span>
<div class="b" style="left:1448.50px;top:295.50px;width:98.00px;height:19.00px;border:1px solid #8f8f8f;border-radius:2px;"></div>
<span class="t" style="left:1454.50px;top:297.00px;font-size:14.5px;line-height:19px;color:#5a5a5a;transform:scaleX(0.8905);">Сформирован</span>
<div class="b" style="left:1557.50px;top:293.50px;width:72.00px;height:23.50px;background:#acacac;border:1px solid #9b9b9b;border-radius:4px;"></div>
<svg class="b" style="left:1564.00px;top:299.00px;overflow:visible;" width="14.00" height="13.07" viewBox="0 0 15 14"><path d="M3.2 5V0.6H9.6L11.8 2.8V5" fill="none" stroke="#8e8e8e" stroke-width="1.3"/><path d="M0 6.4A1.6 1.6 0 0 1 1.6 4.8H13.4A1.6 1.6 0 0 1 15 6.4V11H12V9H3V11H0Z" fill="#8e8e8e"/><rect x="3.2" y="9.4" width="8.6" height="4" fill="none" stroke="#8e8e8e" stroke-width="1.3"/></svg>
<span class="t" style="left:1581.00px;top:297.00px;font-size:14.5px;line-height:19px;color:#8e8e8e;transform:scaleX(0.8908);">Печать</span>
<div class="b" style="left:1636.50px;top:293.50px;width:88.00px;height:23.50px;background:#acacac;border:1px solid #9b9b9b;border-radius:4px;"></div>
<svg class="b" style="left:1643.50px;top:299.00px;overflow:visible;" width="12.00" height="12.00" viewBox="0 0 14 14"><path d="M0 14L0.9 9.9L4.1 13.1Z" fill="#5a5a5a"/><path d="M1.7 9.1L9.3 1.5L12.5 4.7L4.9 12.3Z" fill="#5a5a5a"/><path d="M10.1 0.7L10.8 0A1 1 0 0 1 12.2 0L14 1.8A1 1 0 0 1 14 3.2L13.3 3.9Z" fill="#5a5a5a"/></svg>
<span class="t" style="left:1659.50px;top:297.00px;font-size:14.5px;line-height:19px;color:#5a5a5a;transform:scaleX(0.8915);">Изменить</span>
<div class="b" style="left:1731.50px;top:293.50px;width:88.00px;height:23.50px;background:#acacac;border:1px solid #9b9b9b;border-radius:4px;"></div>
<svg class="b" style="left:1738.00px;top:300.50px;overflow:visible;" width="16.00" height="10.00" viewBox="0 0 16 10"><path d="M0 0H16V10H0Z M1.4 3A1.8 1.8 0 0 0 3 1.4H13A1.8 1.8 0 0 0 14.6 3V7A1.8 1.8 0 0 0 13 8.6H3A1.8 1.8 0 0 0 1.4 7Z" fill="#5a5a5a" fill-rule="evenodd"/><ellipse cx="8" cy="5" rx="2.6" ry="3" fill="#5a5a5a"/><path d="M7.4 3.4L8.4 3V6.4H7.6V4Z" fill="#b0b0b0"/></svg>
<span class="t" style="left:1756.50px;top:297.00px;font-size:14.5px;line-height:19px;color:#5a5a5a;transform:scaleX(0.8755);">Оплатить</span>
<div class="b" style="left:1825.00px;top:293.50px;width:25.00px;height:23.50px;background:#8f3c38;border-radius:4px;"></div>
<div class="b" style="left:260.00px;top:327.00px;width:13.50px;height:13.50px;background:#afafaf;border:1px solid #949494;"></div>
<span class="t" style="left:285.00px;top:327.00px;font-size:14.5px;line-height:19px;color:#454545;transform:scaleX(0.9136);">12.12.2021</span>
<div class="b" style="left:365.00px;top:329.30px;width:5.50px;height:12.00px;background:#96463f;border-radius:2.5px;"></div>
<span class="t" style="left:372.50px;top:327.00px;font-size:14.5px;line-height:19px;color:#454545;transform:scaleX(0.9829);">970</span>
<span class="t" style="left:402.50px;top:327.00px;font-size:14.5px;line-height:19px;color:#454545;transform:scaleX(0.9043);">Аванс Наличные</span>
<span class="t" style="left:1566.00px;top:327.00px;font-size:14.5px;line-height:19px;color:#454545;transform:scaleX(0.9136);">12.12.2021</span>
<span class="t" style="left:1650.00px;top:327.00px;font-size:14.5px;line-height:19px;color:#454545;transform:scaleX(0.9260);">Logus I.</span>
<span class="t" style="left:1779.00px;top:327.00px;font-size:14.5px;line-height:19px;color:#454545;transform:scaleX(0.9136);">15.09.2021</span>
<div class="b" style="left:236.00px;top:347.00px;width:1591.00px;height:25.00px;background:#a5a5a5;"></div>
<div class="b" style="left:260.00px;top:351.70px;width:13.50px;height:13.50px;background:#afafaf;border:1px solid #949494;"></div>
<span class="t" style="left:285.00px;top:352.00px;font-size:14.5px;line-height:19px;color:#454545;transform:scaleX(0.9136);">12.12.2021</span>
<div class="b" style="left:365.00px;top:354.00px;width:5.50px;height:12.00px;background:#8a4a94;border-radius:2.5px;"></div>
<span class="t" style="left:372.50px;top:352.00px;font-size:14.5px;line-height:19px;color:#454545;transform:scaleX(0.8812);">БАЛ</span>
<span class="t" style="left:402.50px;top:352.00px;font-size:14.5px;line-height:19px;color:#454545;transform:scaleX(0.8872);">Перенос Баланса (на счет </span>
<span class="t" style="left:1566.00px;top:352.00px;font-size:14.5px;line-height:19px;color:#454545;transform:scaleX(0.9136);">12.12.2021</span>
<span class="t" style="left:1650.00px;top:352.00px;font-size:14.5px;line-height:19px;color:#454545;transform:scaleX(0.9260);">Logus I.</span>
<span class="t" style="left:1779.00px;top:352.00px;font-size:14.5px;line-height:19px;color:#454545;transform:scaleX(0.9136);">15.09.2021</span>
<div class="b" style="left:260.00px;top:377.20px;width:13.50px;height:13.50px;background:#afafaf;border:1px solid #949494;"></div>
<span class="t" style="left:285.00px;top:377.00px;font-size:14.5px;line-height:19px;color:#454545;transform:scaleX(0.9136);">12.12.2021</span>
<div class="b" style="left:365.00px;top:379.50px;width:5.50px;height:12.00px;background:#46873c;border-radius:2.5px;"></div>
<span class="t" style="left:372.50px;top:377.00px;font-size:14.5px;line-height:19px;color:#454545;transform:scaleX(0.9829);">950</span>
<span class="t" style="left:402.50px;top:377.00px;font-size:14.5px;line-height:19px;color:#454545;transform:scaleX(0.9007);">Наличные</span>
<span class="t" style="left:1566.00px;top:377.00px;font-size:14.5px;line-height:19px;color:#454545;transform:scaleX(0.9136);">12.12.2021</span>
<span class="t" style="left:1650.00px;top:377.00px;font-size:14.5px;line-height:19px;color:#454545;transform:scaleX(0.9260);">Logus I.</span>
<span class="t" style="left:1779.00px;top:377.00px;font-size:14.5px;line-height:19px;color:#454545;transform:scaleX(0.9136);">15.09.2021</span>
<div class="b" style="left:236.00px;top:397.50px;width:1591.00px;height:26.00px;background:#a5a5a5;"></div>
<div class="b" style="left:260.00px;top:402.90px;width:13.50px;height:13.50px;background:#afafaf;border:1px solid #949494;"></div>
<span class="t" style="left:285.00px;top:403.00px;font-size:14.5px;line-height:19px;color:#454545;transform:scaleX(0.9136);">12.12.2021</span>
<div class="b" style="left:365.00px;top:405.20px;width:5.50px;height:12.00px;background:#c73d3d;border-radius:2.5px;"></div>
<span class="t" style="left:372.50px;top:403.00px;font-size:14.5px;line-height:19px;color:#454545;transform:scaleX(0.9829);">100</span>
<span class="t" style="left:402.50px;top:403.00px;font-size:14.5px;line-height:19px;color:#454545;transform:scaleX(0.9267);">Проживание</span>
<span class="t" style="left:1566.00px;top:403.00px;font-size:14.5px;line-height:19px;color:#454545;transform:scaleX(0.9136);">12.12.2021</span>
<span class="t" style="left:1650.00px;top:403.00px;font-size:14.5px;line-height:19px;color:#454545;transform:scaleX(0.9260);">Logus I.</span>
<span class="t" style="left:1779.00px;top:403.00px;font-size:14.5px;line-height:19px;color:#454545;transform:scaleX(0.9136);">15.09.2021</span>
<span class="t" style="left:563.50px;top:352.00px;font-size:14.5px;line-height:19px;color:#4471a0;transform:scaleX(0.9349);text-decoration:underline;">5183519-1</span>
<div class="b" style="left:1205.00px;top:324.00px;width:25.00px;height:20.00px;background:#5a8e66;border-radius:3px;"></div>
<span class="t" style="left:1212.50px;top:325.00px;font-size:13px;line-height:17px;color:#93bd9c;transform:scaleX(1.3462);">Ф</span>
<div class="b" style="left:1232.00px;top:324.00px;width:20.00px;height:20.00px;background:#9b9b9b;border-radius:3px;"></div>
<span class="t" style="left:1237.50px;top:326.00px;font-size:12.5px;line-height:16px;color:#b9b9b9;transform:scaleX(1.0586);">Р</span>
<div class="b" style="left:1205.00px;top:349.00px;width:25.00px;height:20.00px;background:#5a8e66;border-radius:3px;"></div>
<span class="t" style="left:1212.50px;top:351.00px;font-size:13px;line-height:17px;color:#93bd9c;transform:scaleX(1.3462);">Ф</span>
<div class="b" style="left:1232.00px;top:349.00px;width:20.00px;height:20.00px;background:#9b9b9b;border-radius:3px;"></div>
<span class="t" style="left:1237.50px;top:352.00px;font-size:12.5px;line-height:16px;color:#b9b9b9;transform:scaleX(1.0586);">Р</span>
<div class="b" style="left:1205.00px;top:374.00px;width:25.00px;height:20.00px;background:#8c8c8c;border-radius:3px;"></div>
<span class="t" style="left:1212.50px;top:375.00px;font-size:13px;line-height:17px;color:#ababab;transform:scaleX(1.3462);">Ф</span>
<div class="b" style="left:208.00px;top:423.00px;width:1619.00px;height:1.00px;background:#919191;"></div>
<div class="b" style="left:207.00px;top:836.00px;width:1620.00px;height:1.00px;background:#8f8f8f;"></div>
<div class="b" style="left:207.00px;top:837.00px;width:110.00px;height:9.00px;background:#557391;"></div>
<div class="b" style="left:323.00px;top:837.00px;width:93.00px;height:9.00px;background:#a3a3a3;"></div>
<div class="b" style="left:422.00px;top:837.00px;width:172.00px;height:9.00px;background:#a3a3a3;"></div>
<div class="b" style="left:601.00px;top:837.00px;width:164.00px;height:9.00px;background:#a3a3a3;"></div>
<div class="b" style="left:772.00px;top:837.00px;width:100.00px;height:9.00px;background:#a3a3a3;"></div>
<div class="b" style="left:792.00px;top:-6.00px;width:260.00px;height:107.50px;background:rgba(170,170,170,0.8);border:1px solid #959595;border-radius:2px;box-shadow:0 0 3px 2px rgba(0,0,0,.07);"></div>
<div class="b" style="left:875.00px;top:21.90px;width:10.00px;height:10.80px;background:#9b2d20;"></div>
<div class="b" style="left:889.00px;top:18.70px;width:10.00px;height:16.80px;background:#9b2d20;"></div>
<div class="b" style="left:903.00px;top:19.80px;width:10.00px;height:14.90px;background:#9b2d20;"></div>
<div class="b" style="left:917.00px;top:24.00px;width:10.00px;height:7.00px;background:#9b2d20;"></div>
<div class="b" style="left:931.00px;top:21.90px;width:10.00px;height:10.80px;background:#9b2d20;"></div>
<div class="b" style="left:945.00px;top:18.70px;width:10.00px;height:16.80px;background:#9b2d20;"></div>
<div class="b" style="left:959.00px;top:19.80px;width:10.00px;height:14.90px;background:#9b2d20;"></div>
<div class="b" style="left:833.00px;top:46.00px;width:178.00px;height:1.00px;background:#999;"></div>
<div class="b" style="left:841.00px;top:59.00px;width:10.00px;height:10.00px;background:#b0b0b0;border:1px solid #a0a0a0;border-radius:5px;"></div>
<span class="t" style="left:854.50px;top:57.00px;font-size:14.5px;line-height:19px;color:#000;transform:scaleX(0.9154);">Добавление транзакций</span>
<div class="b" style="left:622.00px;top:240.00px;width:600.00px;height:520.00px;background:#fff;border-radius:6px;"></div>
<div class="b" style="left:622.00px;top:711.00px;width:600.00px;height:49.00px;background:#ededed;border-radius:0 0 6px 6px;"></div>
<span class="t" style="left:642.50px;top:252.00px;font-size:22.5px;line-height:29px;color:#000;transform:scaleX(1.0719);-webkit-text-stroke:0.45px #000;">Подтвердите фискализацию</span>
<span class="t" style="left:644.50px;top:302.00px;font-size:13px;line-height:17px;color:#8a8a8a;transform:scaleX(0.9237);">Устройство</span>
<span class="t" style="left:646.50px;top:323.00px;font-size:14.5px;line-height:19px;color:#000;transform:scaleX(0.8986);">Kassa 3554</span>
<span class="t" style="left:924.50px;top:302.00px;font-size:13px;line-height:17px;color:#8a8a8a;transform:scaleX(0.9439);">Отправить чек по e-mail или SMS</span>
<div class="b" style="left:925.00px;top:320.00px;width:151.00px;height:26.00px;background:#fff;border:1px solid #c9c9c9;"></div>
<div class="b" style="left:1060.00px;top:320.00px;width:1.00px;height:26.00px;background:#c9c9c9;"></div>
<svg class="b" style="left:1065.00px;top:331.00px;" width="6.00" height="3.50" viewBox="0 0 6 3.5"><path d="M0 0h6L3 3.5z" fill="#4a4a4a"/></svg>
<span class="t" style="left:929.50px;top:325.00px;font-size:15px;line-height:20px;color:#a2a2a2;transform:scaleX(0.9210);">не отправлять</span>
<div class="b" style="left:1082.00px;top:323.00px;width:39.50px;height:20.00px;background:#dfdfdf;border:1px solid #dadada;border-radius:11px;"></div>
<div class="b" style="left:1083.00px;top:324.00px;width:18.50px;height:18.00px;background:#f8f8f8;border:1px solid #ececec;border-radius:10px;"></div>
<span class="t" style="left:1123.50px;top:325.00px;font-size:14.5px;line-height:19px;color:#000;transform:scaleX(0.9032);">Не печатать</span>
<div class="b" style="left:645.00px;top:375.00px;width:554.00px;height:322.50px;background:#eeeeee;border:1px solid #d2d2d2;"></div>
<div class="b" style="left:1181.00px;top:376.00px;width:17.00px;height:320.50px;background:#fafafa;"></div>
<svg class="b" style="left:1185.00px;top:379.00px;" width="9.00" height="6.00" viewBox="0 0 9 6"><path d="M1.5 4.5L4.5 1.5L7.5 4.5z" fill="#b5b5b5"/></svg>
<svg class="b" style="left:1185.00px;top:687.00px;" width="9.00" height="6.00" viewBox="0 0 9 6"><path d="M1.5 1.5L4.5 4.5L7.5 1.5z" fill="#b5b5b5"/></svg>
<div class="b" style="left:676.00px;top:406.00px;width:474.50px;height:260.50px;background:#fff;border:1px solid #dcdcdc;"></div>
<span class="t m bd" style="left:876.75px;top:421.00px;font-size:17.5px;line-height:23px;color:#1c1c1c;">Продажа</span>
<span class="t m" style="left:850.49px;top:444.00px;font-size:15px;line-height:20px;color:#1c1c1c;">Чек №1182185/1</span>
<span class="t m" style="left:854.99px;top:465.00px;font-size:15px;line-height:20px;color:#1c1c1c;">Счёт №1182185</span>
<span class="t m" style="left:845.99px;top:486.00px;font-size:15px;line-height:20px;color:#1c1c1c;">Logus Installer</span>
<span class="t m bd" style="left:690.50px;top:510.00px;font-size:15px;line-height:20px;color:#1c1c1c;">Товары и услуги</span>
<div class="b" style="left:689.00px;top:531.50px;width:449.00px;height:1.00px;background:#cfcfcf;"></div>
<span class="t m" style="left:690.50px;top:535.00px;font-size:15px;line-height:20px;color:#1c1c1c;">Проживание Улучшенный</span>
<span class="t m" style="left:690.50px;top:552.00px;font-size:15px;line-height:20px;color:#1c1c1c;">двухместный номер с</span>
<span class="t m" style="left:690.50px;top:569.00px;font-size:15px;line-height:20px;color:#1c1c1c;">одной</span>
<span class="t m" style="left:690.50px;top:586.00px;font-size:15px;line-height:20px;color:#1c1c1c;">кроватью;12.12.2021;</span>
<span class="t" style="left:911.50px;top:535.00px;font-size:9.5px;line-height:12px;color:#222;transform:scaleX(0.9634);">Полный расчёт</span>
<span class="t" style="left:911.50px;top:548.00px;font-size:9.5px;line-height:12px;color:#222;transform:scaleX(0.9234);">Услуга</span>
<span class="t m" style="left:987.00px;top:535.00px;font-size:15px;line-height:20px;color:#1c1c1c;">1,00x</span>
<span class="t m" style="left:1100.50px;top:535.00px;font-size:15px;line-height:20px;color:#1c1c1c;">7800</span>
<span class="t m bd" style="left:690.50px;top:610.00px;font-size:15px;line-height:20px;color:#1c1c1c;">Оплаты</span>
<div class="b" style="left:689.00px;top:631.50px;width:449.00px;height:1.00px;background:#cfcfcf;"></div>
<span class="t m" style="left:690.50px;top:635.00px;font-size:15px;line-height:20px;color:#1c1c1c;">Аванс</span>
<span class="t m" style="left:1073.49px;top:635.00px;font-size:15px;line-height:20px;color:#1c1c1c;">7800,00</span>
<div class="b" style="left:843.00px;top:721.00px;width:247.00px;height:29.00px;background:#3a9650;border:1px solid #338646;border-radius:4px;"></div>
<span class="t" style="left:860.50px;top:727.00px;font-size:15.5px;line-height:20px;color:#fff;transform:scaleX(0.9611);">Сохранить и фискализировать</span>
<div class="b" style="left:1096.00px;top:721.00px;width:103.00px;height:29.00px;background:#fff;border:1px solid #d9d9d9;border-radius:4px;"></div>
<span class="t" style="left:1113.50px;top:727.00px;font-size:15.5px;line-height:20px;color:#636363;transform:scaleX(0.9572);">Отменить</span>
</body></html>
